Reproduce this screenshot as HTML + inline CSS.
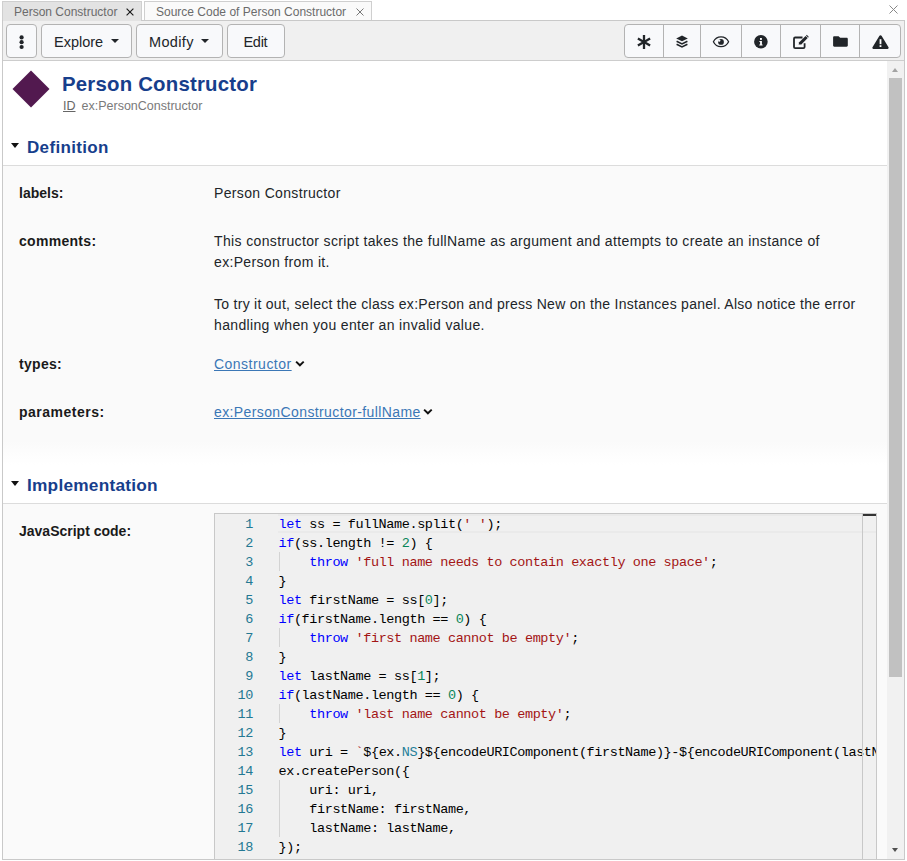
<!DOCTYPE html>
<html><head><meta charset="utf-8">
<style>
*{box-sizing:border-box;margin:0;padding:0}
html,body{width:907px;height:861px;overflow:hidden;background:#fff;font-family:"Liberation Sans",sans-serif;color:#212529}
.abs{position:absolute}
.tab{position:absolute;top:1px;height:20px;border:1px solid #cfcfcf;border-bottom:none;font-size:12px;line-height:18px;color:#6b6b6b;white-space:nowrap}
.tab1{left:2px;width:140px;background:#e3e3e3}
.tab2{left:144px;width:228px;background:#fafafa;border-bottom:1px solid #cfcfcf;height:20px}
.tab .t{position:absolute;left:11px;top:1px}
.x{position:absolute}
#panel{position:absolute;left:2px;top:20px;width:903px;height:840px;border:1px solid #c9c9c9;background:#fff}
#toolbar{position:absolute;left:0;top:0;width:901px;height:40px;background:#f0f0f0;border-bottom:1px solid #cdcdcd}
.btn{position:absolute;top:3px;height:34px;border:1px solid #b3b3b3;border-radius:4px;background:#f8f9fb;font-size:14.5px;color:#212529}
.btn .bt{position:absolute;top:9px;white-space:nowrap}
.caret{position:absolute;width:0;height:0;border-left:4px solid transparent;border-right:4px solid transparent;border-top:4.5px solid #212529}
.grp{position:absolute;top:3px;left:621px;width:277px;height:34px;border:1px solid #b3b3b3;border-radius:4px;background:#f8f9fb}
.div{position:absolute;top:0;width:1px;height:32px;background:#b3b3b3}
svg{position:absolute;overflow:visible}
.sect{position:absolute;left:0;width:884px}
.hdr{font-weight:bold;color:#173e8c}
.lbl{position:absolute;left:16px;font-weight:bold;font-size:14px;color:#1a1a1a;white-space:nowrap}
.val{position:absolute;left:211px;font-size:14px;letter-spacing:0.34px;color:#212529;white-space:nowrap;line-height:21px}
a{color:#3b77b6;text-decoration:underline}
.code{font-family:"Liberation Mono",monospace;font-size:13.5px;letter-spacing:-0.4px;white-space:pre;line-height:19px}
.ln{position:absolute;right:0;width:60px;text-align:right;color:#237893}
.kw{color:#0000ff}.typ{color:#267f99}.str{color:#a31515}.num{color:#098658}
</style></head><body>

<!-- tabs -->
<div class="tab tab1"><span class="t">Person Constructor</span>
  <svg style="left:123px;top:6px" width="8" height="8" viewBox="0 0 8 8"><path d="M0.6 0.6L7.4 7.4M7.4 0.6L0.6 7.4" stroke="#1a1a1a" stroke-width="1.15"/></svg>
</div>
<div class="tab tab2"><span class="t">Source Code of Person Constructor</span>
  <svg style="left:211px;top:6px" width="8" height="8" viewBox="0 0 8 8"><path d="M0.5 0.5L7.5 7.5M7.5 0.5L0.5 7.5" stroke="#777" stroke-width="1"/></svg>
</div>
<svg style="left:889px;top:5px" width="9" height="9" viewBox="0 0 9 9"><path d="M0.5 0.5L8.5 8.5M8.5 0.5L0.5 8.5" stroke="#888" stroke-width="1"/></svg>

<div id="panel">
 <div id="toolbar">
  <div class="btn" style="left:3px;width:31px">
    <svg style="left:12px;top:10px" width="6" height="16" viewBox="0 0 6 16"><circle cx="2.6" cy="2.4" r="2.1" fill="#212529"/><circle cx="2.6" cy="7.2" r="2.1" fill="#212529"/><circle cx="2.6" cy="12" r="2.1" fill="#212529"/></svg>
  </div>
  <div class="btn" style="left:38px;width:91px"><span class="bt" style="left:12px">Explore</span><span class="caret" style="left:69px;top:14px"></span></div>
  <div class="btn" style="left:133px;width:87px"><span class="bt" style="left:12px;letter-spacing:0.35px">Modify</span><span class="caret" style="left:64px;top:14px"></span></div>
  <div class="btn" style="left:224px;width:58px"><span class="bt" style="left:15.5px;letter-spacing:-0.3px">Edit</span></div>

  <div class="grp">
   <div class="div" style="left:38px"></div>
   <div class="div" style="left:75px"></div>
   <div class="div" style="left:116px"></div>
   <div class="div" style="left:155px"></div>
   <div class="div" style="left:195px"></div>
   <div class="div" style="left:234px"></div>
  </div>
 </div>
</div>

<div class="abs" style="left:3px;top:20px;width:138px;height:1px;background:#e3e3e3"></div>
<!-- toolbar icons (page coords) -->
<svg style="left:637px;top:35px" width="14" height="14" viewBox="0 0 14 14"><g stroke="#212529" stroke-width="2.3" stroke-linecap="butt"><path d="M7 0V14"/><path d="M0.9 3.5L13.1 10.5"/><path d="M0.9 10.5L13.1 3.5"/></g></svg>
<svg style="left:676px;top:35px" width="12" height="13" viewBox="0 0 12 13"><path d="M6 0.5L11.8 3.4L6 6.3L0.2 3.4Z" fill="#212529"/><path d="M0.6 6.2L6 8.9L11.4 6.2" stroke="#212529" stroke-width="1.6" fill="none"/><path d="M0.6 9.2L6 11.9L11.4 9.2" stroke="#212529" stroke-width="1.6" fill="none"/></svg>
<svg style="left:712px;top:36px" width="18" height="12" viewBox="0 0 18 12"><path d="M9 0.9C5.3 0.9 2.6 3.3 1.4 5.8C2.6 8.3 5.3 10.7 9 10.7C12.7 10.7 15.4 8.3 16.6 5.8C15.4 3.3 12.7 0.9 9 0.9Z" stroke="#212529" stroke-width="1.25" fill="none"/><circle cx="9" cy="5.9" r="2.9" fill="#212529"/><circle cx="7.2" cy="4.6" r="1.2" fill="#f8f9fb"/></svg>
<svg style="left:754px;top:35px" width="14" height="14" viewBox="0 0 14 14"><circle cx="6.9" cy="6.8" r="6.8" fill="#212529"/><rect x="6" y="3" width="1.9" height="1.9" fill="#fff"/><path d="M5.4 6H7.9V9.5H8.6V10.4H5.3V9.5H6.1V6.9H5.4Z" fill="#fff"/></svg>
<svg style="left:793px;top:35px" width="16" height="14" viewBox="0 0 16 14"><path d="M9.5 2.5H2.2C1.5 2.5 1 3 1 3.7V12C1 12.7 1.5 13.2 2.2 13.2H10.4C11.1 13.2 11.6 12.7 11.6 12V8.2" stroke="#212529" stroke-width="1.8" fill="none"/><path d="M5.6 9.4L6.2 7.3L12.6 0.9L14.7 3L8.3 9.4Z" fill="#212529"/><path d="M13 0.5L13.8 -0.2L15.9 1.9L15.1 2.6Z" fill="#212529"/></svg>
<svg style="left:833px;top:36px" width="15" height="11" viewBox="0 0 15 11"><path d="M1.3 0.2H5.6L7.2 1.8H13.6C14.3 1.8 14.8 2.3 14.8 3V9.6C14.8 10.3 14.3 10.8 13.6 10.8H1.3C0.6 10.8 0.1 10.3 0.1 9.6V1.4C0.1 0.7 0.6 0.2 1.3 0.2Z" fill="#212529"/></svg>
<svg style="left:872px;top:35px" width="17" height="14" viewBox="0 0 17 14"><path d="M8.5 0.2C9 0.2 9.4 0.4 9.7 0.9L16.5 12.3C17 13.1 16.4 13.9 15.6 13.9H1.4C0.6 13.9 0 13.1 0.5 12.3L7.3 0.9C7.6 0.4 8 0.2 8.5 0.2Z" fill="#212529"/><rect x="7.6" y="4.2" width="1.8" height="5" fill="#fff"/><rect x="7.6" y="10.2" width="1.8" height="1.8" fill="#fff"/></svg>

<!-- header -->
<svg style="left:12px;top:70px" width="38" height="38" viewBox="0 0 38 38"><path d="M19 0.5L37.5 19L19 37.5L0.5 19Z" fill="#52194f"/></svg>
<div class="abs hdr" style="left:62px;top:73px;font-size:20.4px;letter-spacing:0.2px;white-space:nowrap">Person Constructor</div>
<div class="abs" style="left:63px;top:99px;font-size:12.5px;color:#7a7a7a;white-space:nowrap"><span style="text-decoration:underline;color:#666">ID</span><span style="margin-left:6px">ex:PersonConstructor</span></div>

<!-- Definition -->
<div class="abs" style="left:3px;top:166px;width:884px;height:275px;background:#fafafa"></div>
<div class="abs" style="left:3px;top:441px;width:884px;height:24px;background:linear-gradient(#fafafa,#fff)"></div>
<div class="abs" style="left:3px;top:165px;width:884px;height:1px;background:#dcdcdc"></div>
<div class="abs" style="left:11px;top:143px;width:0;height:0;border-left:4.5px solid transparent;border-right:4.5px solid transparent;border-top:5px solid #111"></div>
<div class="abs hdr" style="left:27px;top:138px;font-size:17px;letter-spacing:0.33px;white-space:nowrap">Definition</div>

<div class="lbl" style="left:19px;top:185px">labels:</div>
<div class="val" style="left:214px;top:183px">Person Constructor</div>
<div class="lbl" style="left:19px;top:233px;letter-spacing:0.3px">comments:</div>
<div class="val" style="left:214px;top:231px"><span style="letter-spacing:0.36px">This constructor script takes the fullName as argument and attempts to create an instance of</span><br>ex:Person from it.<br><br><span style="letter-spacing:0.28px">To try it out, select the class ex:Person and press New on the Instances panel. Also notice the error</span><br>handling when you enter an invalid value.</div>
<div class="lbl" style="left:19px;top:356px;letter-spacing:0.3px">types:</div>
<div class="val" style="left:214px;top:354px"><a style="letter-spacing:0.48px">Constructor</a></div>
<svg style="left:295px;top:360px" width="10" height="7" viewBox="0 0 10 7"><path d="M1.1 1.6L4.9 5.3L8.7 1.6" stroke="#111" stroke-width="1.9" fill="none"/></svg>
<div class="lbl" style="left:19px;top:404px;letter-spacing:0.5px">parameters:</div>
<div class="val" style="left:214px;top:402px"><a style="letter-spacing:0.39px">ex:PersonConstructor-fullName</a></div>
<svg style="left:423px;top:408px" width="10" height="7" viewBox="0 0 10 7"><path d="M1.1 1.6L4.9 5.3L8.7 1.6" stroke="#111" stroke-width="1.9" fill="none"/></svg>

<!-- Implementation -->
<div class="abs" style="left:3px;top:504px;width:884px;height:355px;background:#fafafa"></div>
<div class="abs" style="left:3px;top:503px;width:884px;height:1px;background:#dcdcdc"></div>
<div class="abs" style="left:11px;top:481px;width:0;height:0;border-left:4.5px solid transparent;border-right:4.5px solid transparent;border-top:5px solid #111"></div>
<div class="abs hdr" style="left:27px;top:475px;font-size:17.3px;letter-spacing:0.22px;white-space:nowrap">Implementation</div>
<div class="lbl" style="left:19px;top:523px">JavaScript code:</div>

<div class="abs" style="left:214px;top:513px;width:663px;height:346px;background:#f0f0f0;border:1px solid #c8c8c8;border-bottom:none;overflow:hidden">
 <div class="abs" style="left:63px;top:0;width:600px;height:19px;border-top:2px solid #eaeaea;border-bottom:2px solid #eaeaea"></div>
 <div class="code abs" style="left:0;top:1px;width:38px;text-align:right;color:#237893">1
2
3
4
5
6
7
8
9
10
11
12
13
14
15
16
17
18</div>
 <div class="code abs" style="left:63.5px;top:1px;width:597.5px;overflow:hidden;color:#000"><span class="kw">let</span> ss = fullName.split(<span class="str">' '</span>);
<span class="kw">if</span>(ss.length != <span class="num">2</span>) {
    <span class="kw">throw</span> <span class="str">'full name needs to contain exactly one space'</span>;
}
<span class="kw">let</span> firstName = ss[<span class="num">0</span>];
<span class="kw">if</span>(firstName.length == <span class="num">0</span>) {
    <span class="kw">throw</span> <span class="str">'first name cannot be empty'</span>;
}
<span class="kw">let</span> lastName = ss[<span class="num">1</span>];
<span class="kw">if</span>(lastName.length == <span class="num">0</span>) {
    <span class="kw">throw</span> <span class="str">'last name cannot be empty'</span>;
}
<span class="kw">let</span> uri = <span class="str">`</span>${ex.<span class="typ">NS</span>}${encodeURIComponent(firstName)}-${encodeURIComponent(lastName)}<span class="str">`</span>;
ex.createPerson({
    uri: uri,
    firstName: firstName,
    lastName: lastName,
});</div>
 <div class="abs" style="left:64px;top:38px;width:1px;height:19px;background:#d3d3d3"></div>
 <div class="abs" style="left:64px;top:114px;width:1px;height:19px;background:#d3d3d3"></div>
 <div class="abs" style="left:64px;top:190px;width:1px;height:19px;background:#d3d3d3"></div>
 <div class="abs" style="left:64px;top:266px;width:1px;height:57px;background:#d3d3d3"></div>
 <div class="abs" style="left:647px;top:0;width:14px;height:346px;border-left:1px solid #c8c8c8"></div>
 <div class="abs" style="left:648px;top:0;width:14px;height:2px;background:#333"></div>
</div>

<!-- page scrollbar -->
<div class="abs" style="left:887px;top:61px;width:17px;height:798px;background:#f1f1f1"></div>
<div class="abs" style="left:889px;top:78px;width:13px;height:599px;background:#c1c1c1"></div>
<div class="abs" style="left:892px;top:68px;width:0;height:0;border-left:3.7px solid transparent;border-right:3.7px solid transparent;border-bottom:4.2px solid #a3a3a3"></div>
<div class="abs" style="left:892px;top:848px;width:0;height:0;border-left:3.7px solid transparent;border-right:3.7px solid transparent;border-top:4.2px solid #505050"></div>

</body></html>
